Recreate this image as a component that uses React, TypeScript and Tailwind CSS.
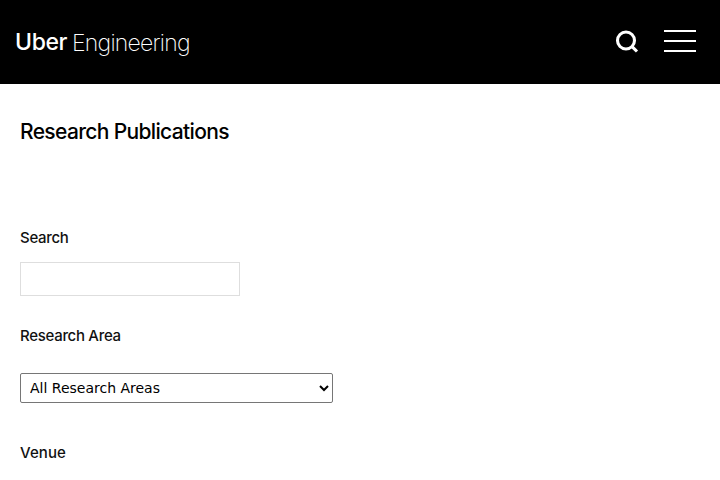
import React from "react";

function Header() {
  return (
    <header className="flex h-[84px] items-center justify-between bg-black pl-[15px] pr-6 text-white">
      <a className="flex h-9 items-start whitespace-nowrap leading-9" aria-label="Uber Engineering">
        <span className="w-[57px] font-['Inter',sans-serif] text-[23px] font-medium tracking-[-0.4px]">Uber</span>
        <span className="pt-px font-['Inter',sans-serif] text-[23px] font-extralight tracking-[-0.75px]">Engineering</span>
      </a>
      <div className="flex items-center">
        <button aria-label="Search" className="mr-[25px] mb-[2px] block">
          <svg width="24" height="24" viewBox="0 0 24 24" fill="none" stroke="currentColor" strokeWidth="3.1">
            <circle cx="11" cy="11.5" r="8.5" />
            <path d="M16.8 17.3 22 22.5" />
          </svg>
        </button>
        <button aria-label="Menu" className="mb-[2px] flex flex-col gap-2">
          <span className="block h-[2px] w-8 bg-white" />
          <span className="block h-[2px] w-8 bg-white" />
          <span className="block h-[2px] w-8 bg-white" />
        </button>
      </div>
    </header>
  );
}

export default function App() {
  return (
    <div className="h-[480px] overflow-hidden bg-white font-['Inter',sans-serif] text-black">
      <Header />
      <main className="flex flex-col items-start px-5 pt-8">
        <h1 className="h-8 whitespace-nowrap text-[21px] font-medium leading-8 tracking-[-0.65px]">Research Publications</h1>
        <label htmlFor="q" className="mt-[78px] h-6 whitespace-nowrap text-[15px] font-medium leading-6 text-[#111] tracking-[-0.3px]">Search</label>
        <input id="q" className="mt-3 h-[34px] w-[220px] border border-[#dedede] bg-white px-2 outline-none" />
        <label htmlFor="area" className="mt-7 h-6 whitespace-nowrap text-[15px] font-medium leading-6 text-[#111] tracking-[-0.3px]">Research Area</label>
        <select
          id="area"
          className="mt-[25px] h-[30px] w-[313px] rounded-[2px] border border-[#767676] bg-white px-[5px] font-['DejaVu_Sans',sans-serif] text-[14px] leading-5"
        >
          <option>All Research Areas</option>
        </select>
        <span className="mt-[38px] h-6 whitespace-nowrap text-[15px] font-medium leading-6 text-[#111] tracking-[0.1px]">Venue</span>
      </main>
    </div>
  );
}
